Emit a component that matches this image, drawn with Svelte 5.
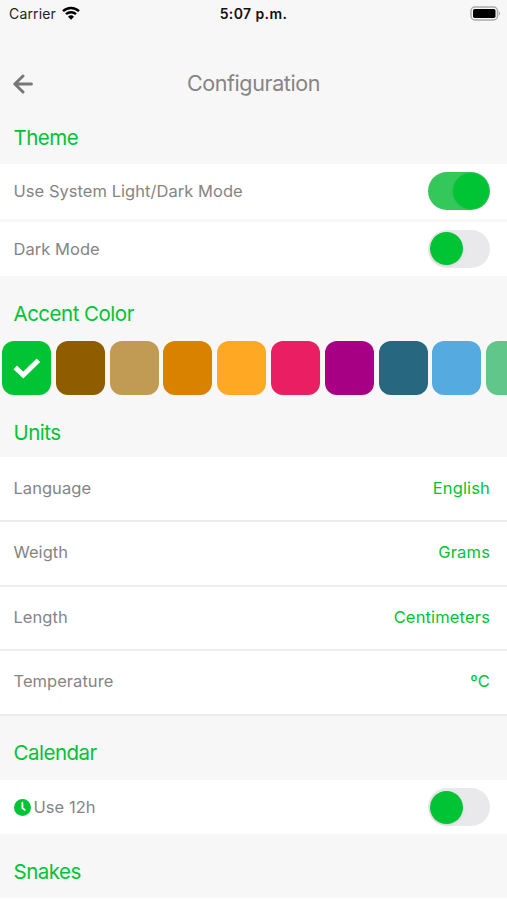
<script lang="ts">
	type Unit = { label: string; value: string };

	let useSystem = $state(true);
	let darkMode = $state(false);
	let use12h = $state(false);
	let selected = $state(0);

	const accents = [
		"#00c434",
		"#8f5c00",
		"#c19a54",
		"#d98200",
		"#ffa824",
		"#e91e63",
		"#a80084",
		"#27677f",
		"#55aae0",
		"#60c689",
	];

	const units: Unit[] = [
		{ label: "Language", value: "English" },
		{ label: "Weigth", value: "Grams" },
		{ label: "Length", value: "Centimeters" },
		{ label: "Temperature", value: "ºC" },
	];
</script>

{#snippet toggle(on: boolean, label: string, flip: () => void)}
	<button
		class="toggle"
		class:on
		role="switch"
		aria-checked={on}
		aria-label={label}
		onclick={flip}>
		<span class="knob"></span>
	</button>
{/snippet}

<div class="screen">
	<div class="status">
		<div class="carrier">
			<span>Carrier</span>
			<svg width="18" height="14" viewBox="0 0 18 14">
				<g fill="none" stroke="#000" stroke-width="2.5">
					<path d="M1 5.1a11.6 11.6 0 0 1 16 0" />
					<path d="M4 8.2a7.2 7.2 0 0 1 10 0" />
				</g>
				<path d="M9 13.7 6 10.7a4.3 4.3 0 0 1 6 0z" />
			</svg>
		</div>
		<span class="time">5:07 p.m.</span>
		<svg class="battery" width="31" height="15" viewBox="0 0 31 15">
			<rect x="1" y="1" width="26.5" height="13" rx="4" fill="#f7f7f7" stroke="#aaa" stroke-width="1.4" />
			<rect x="3" y="3" width="22.5" height="9" rx="1.8" />
			<path d="M28.8 5.2q2.6 2.3 0 4.6z" fill="#aaa" />
		</svg>
	</div>

	<header>
		<button class="back" aria-label="Back">
			<svg width="20" height="20" viewBox="0 0 20 20">
				<path d="M10 2 1.8 10 10 18M2.5 10H18.4" />
			</svg>
		</button>
		<h1>Configuration</h1>
	</header>

	<h2 class="theme">Theme</h2>
	<div class="row">
		<span>Use System Light/Dark Mode</span>
		{@render toggle(useSystem, "Use System Light/Dark Mode", () => (useSystem = !useSystem))}
	</div>
	<div class="row next">
		<span>Dark Mode</span>
		{@render toggle(darkMode, "Dark Mode", () => (darkMode = !darkMode))}
	</div>

	<h2 class="accent">Accent Color</h2>
	<div class="swatches">
		{#each accents as color, i}
			<button
				class="swatch"
				style:background-color={color}
				aria-label={color}
				onclick={() => (selected = i)}>
				{#if selected === i}
					<svg width="28" height="22" viewBox="0 0 28 22">
						<path d="M2.2 10.4 10.3 18 25.4 3.2" />
					</svg>
				{/if}
			</button>
		{/each}
	</div>

	<h2 class="units">Units</h2>
	{#each units as unit}
		<div class="unit">
			<span>{unit.label}</span>
			<span class="value">{unit.value}</span>
		</div>
	{/each}

	<h2 class="calendar">Calendar</h2>
	<div class="row">
		<span class="clock">
			<svg width="17" height="17" viewBox="0 0 17 17">
				<circle cx="8.5" cy="8.5" r="8.5" fill="#00c434" />
				<path d="M8.4 3.6V9L10.8 10.9" />
			</svg>
			Use 12h
		</span>
		{@render toggle(use12h, "Use 12h", () => (use12h = !use12h))}
	</div>

	<h2 class="snakes">Snakes</h2>
	<div class="row"></div>
</div>

<style>
	:global(body) {
		margin: 0;
		background: #f7f7f7;
	}

	.screen {
		height: 900px;
		overflow: hidden;
		display: flex;
		flex-direction: column;
		background: #f7f7f7;
		color: #858585;
		font-family: Inter, "Liberation Sans", sans-serif;
		font-size: 16.5px;
		letter-spacing: 0.04px;
	}

	.screen > * {
		flex-shrink: 0;
	}

	button {
		border: 0;
		padding: 0;
		background: none;
		display: flex;
		align-items: center;
		justify-content: center;
	}

	.status {
		height: 28px;
		padding: 0 6px 1px 9px;
		box-sizing: border-box;
		display: grid;
		grid-template-columns: 1fr auto 1fr;
		align-items: center;
		color: #222;
		font-size: 14px;
	}

	.carrier {
		display: flex;
		align-items: center;
		gap: 6px;
		letter-spacing: 0.15px;
	}

	.carrier svg {
		margin-top: -2px;
	}

	.time {
		margin-right: 3px;
		color: #111;
		font-weight: 600;
		letter-spacing: 0.4px;
	}

	.battery {
		justify-self: end;
		margin-top: -1px;
	}

	header {
		height: 82px;
		padding: 0 13px;
		display: grid;
		grid-template-columns: 1fr auto 1fr;
		align-items: center;
	}

	.back {
		justify-self: start;
	}

	.back svg {
		margin-top: 29px;
		fill: none;
		stroke: #777;
		stroke-width: 3;
		stroke-linecap: round;
		stroke-linejoin: round;
	}

	h1,
	h2 {
		margin: 0;
		font-weight: 400;
	}

	h1 {
		margin-top: 27px;
		font-size: 21.5px;
		letter-spacing: -0.4px;
	}

	h2 {
		padding-left: 13.5px;
		box-sizing: border-box;
		display: flex;
		align-items: center;
		color: #00c434;
		font-size: 20.5px;
		letter-spacing: -0.5px;
	}

	.theme {
		height: 54px;
	}

	.accent {
		height: 65px;
		padding-top: 10px;
	}

	.units {
		height: 62.4px;
		padding-top: 12px;
	}

	.calendar {
		height: 64px;
		padding-top: 10px;
	}

	.snakes {
		height: 63.5px;
		padding-top: 10px;
	}

	.row {
		min-height: 54.5px;
		padding: 0 17px 0 13.5px;
		display: flex;
		align-items: center;
		justify-content: space-between;
		background: #fff;
	}

	.next {
		margin-top: 3px;
	}

	.toggle {
		width: 62px;
		height: 38px;
		padding: 0 2px;
		border-radius: 19px;
		box-sizing: border-box;
		justify-content: flex-start;
		background: #e9e9eb;
	}

	.knob {
		width: 33px;
		height: 33px;
		border-radius: 50%;
		background: #00c434;
		box-shadow: 0 1px 3px rgb(0 0 0 / 0.1);
	}

	.toggle.on {
		padding: 0 1px;
		justify-content: flex-end;
		background: #34c759;
	}

	.toggle.on .knob {
		width: 36px;
		height: 36px;
		box-shadow: 0 0 2px rgb(0 80 20 / 0.12);
	}

	.swatches {
		padding-left: 2px;
		display: flex;
		gap: 4.8px;
		overflow: hidden;
	}

	.swatch {
		width: 49px;
		height: 54px;
		flex-shrink: 0;
		border-radius: 12px;
	}

	.swatch path {
		fill: none;
		stroke: #fff;
		stroke-width: 5;
	}

	.unit {
		height: 64.6px;
		padding: 0 17px 2px 13.5px;
		box-sizing: border-box;
		border-bottom: 2px solid #ececec;
		display: flex;
		align-items: center;
		justify-content: space-between;
		background: #fff;
	}

	.value {
		color: #00c434;
		letter-spacing: 0.15px;
	}

	.clock {
		display: flex;
		align-items: center;
		gap: 3px;
	}

	.clock path {
		fill: none;
		stroke: #fff;
		stroke-width: 1.8;
		stroke-linecap: round;
	}
</style>
